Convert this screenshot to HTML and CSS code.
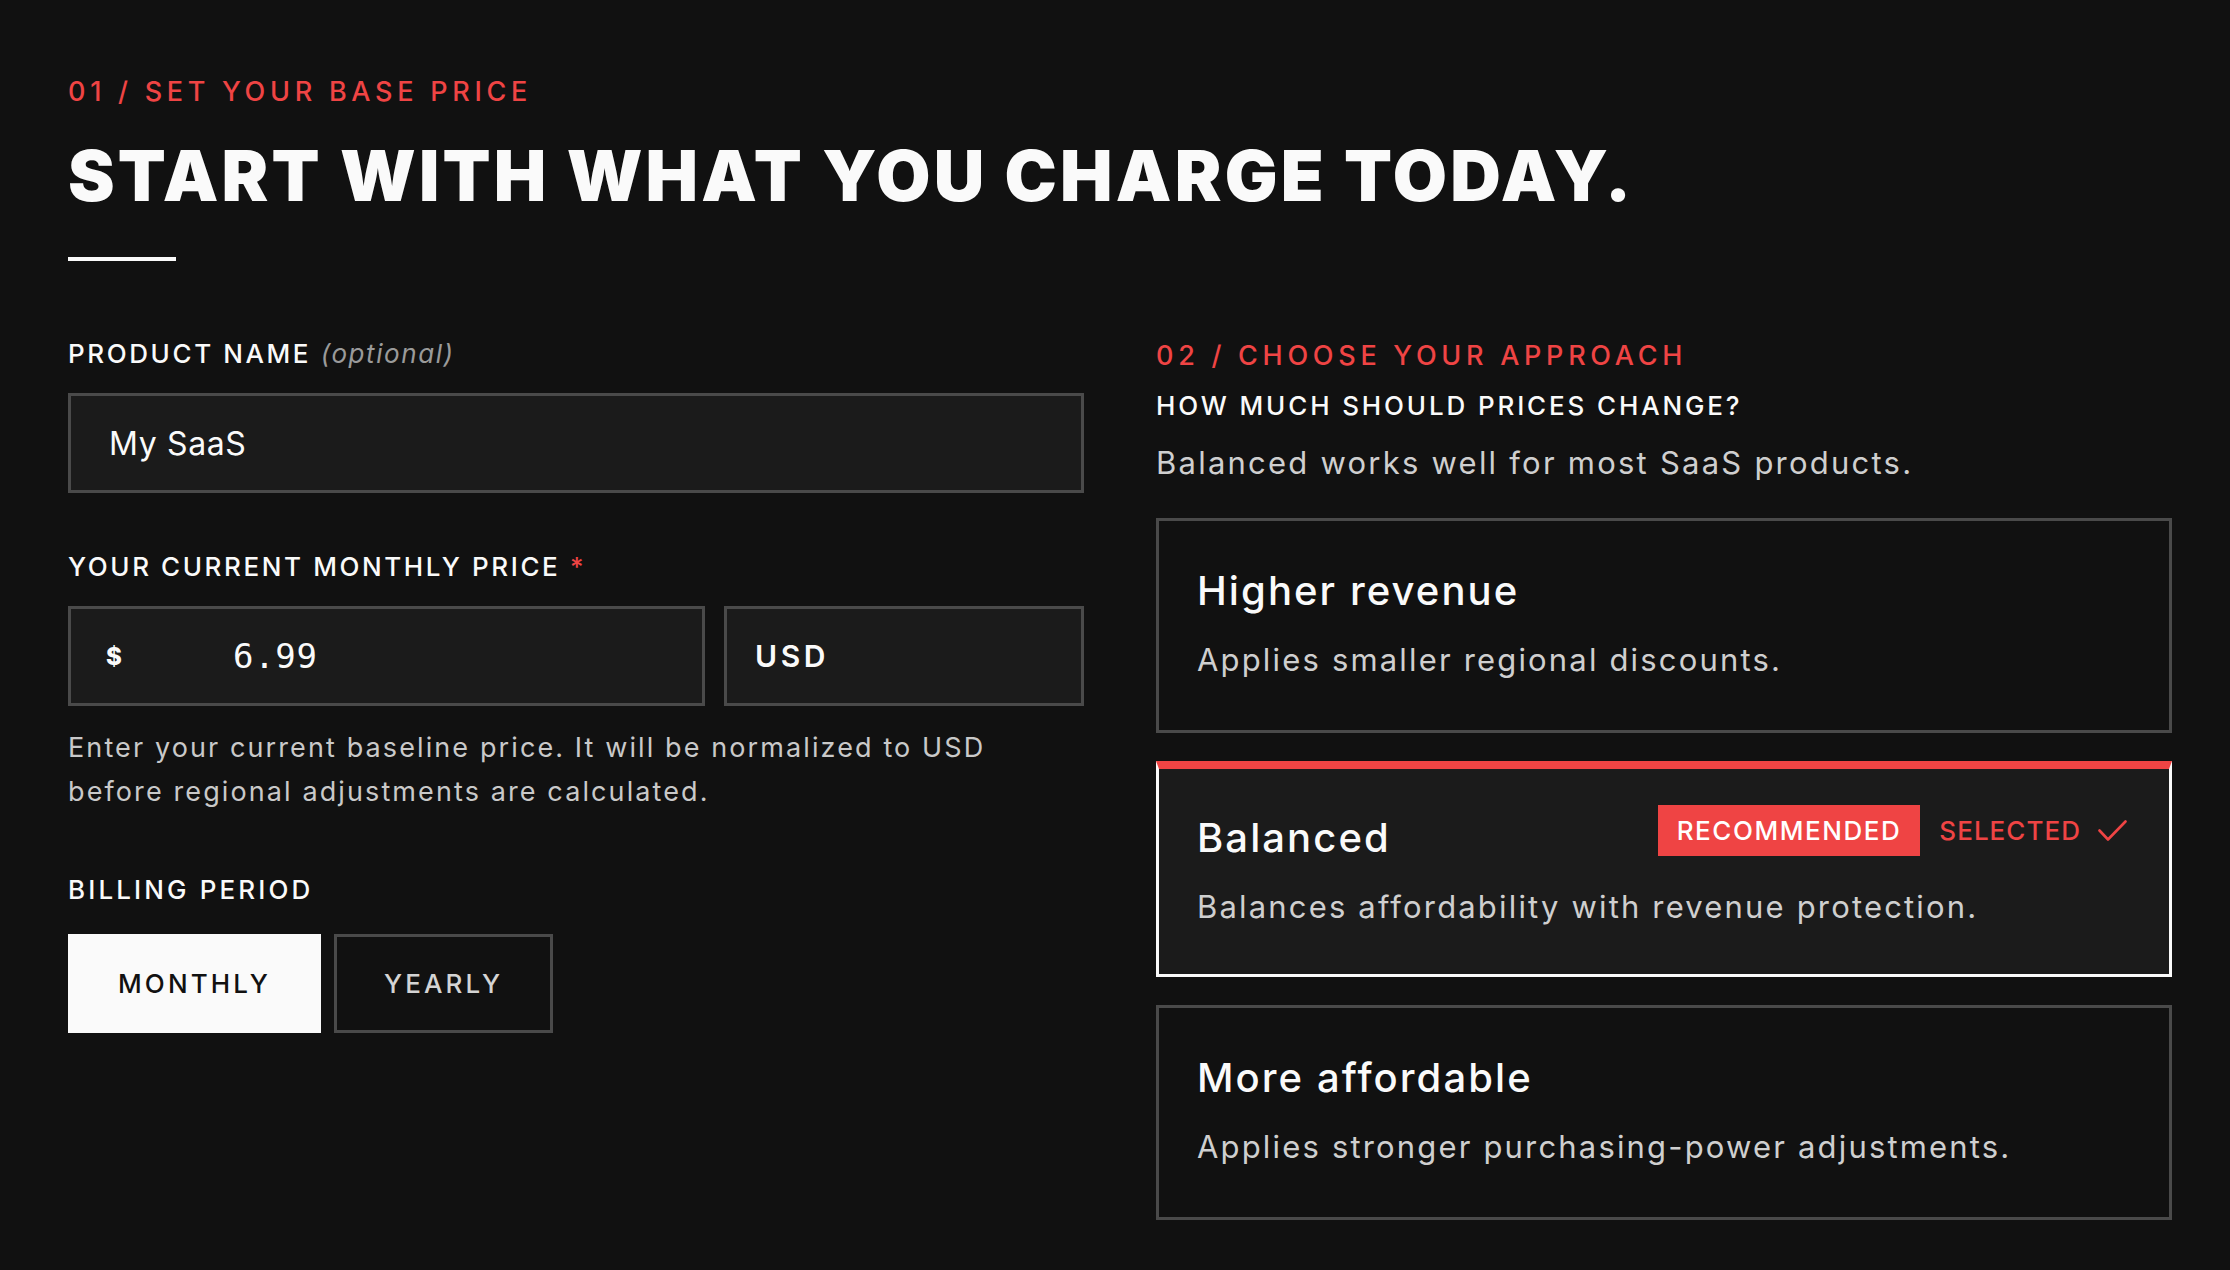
FILE: index.html
```html
<!DOCTYPE html>
<html lang="en">
<head>
  <meta charset="UTF-8" />
  <meta name="viewport" content="width=device-width, initial-scale=1.0"/>
  <title>Regional Pricing - Base Price</title>
  <link rel="stylesheet" href="styles.css">
</head>
<body>
  <main class="page">
    <header class="intro">
      <p class="step">01 / Set your base price</p>
      <h1 class="title">Start with what you charge today.</h1>
      <div class="rule"></div>
    </header>

    <div class="columns">
      <section class="col col-left">
        <div class="field">
          <label class="field-label" for="productName">Product name <em class="optional">(optional)</em></label>
          <input class="text-input" id="productName" type="text" value="My SaaS" />
        </div>

        <div class="field">
          <label class="field-label" for="price">Your current monthly price <span class="req">*</span></label>
          <div class="price-row">
            <div class="price-box">
              <span class="currency-sign">$</span>
              <input class="price-input" id="price" type="text" value="6.99" />
            </div>
            <select class="currency-select">
              <option>USD</option>
              <option>EUR</option>
              <option>GBP</option>
            </select>
          </div>
          <p class="hint">Enter your current baseline price. It will be normalized to USD before regional adjustments are calculated.</p>
        </div>

        <div class="field">
          <span class="field-label">Billing period</span>
          <div class="toggle">
            <button class="toggle-btn active" data-period="monthly">Monthly</button>
            <button class="toggle-btn" data-period="yearly">Yearly</button>
          </div>
        </div>
      </section>

      <section class="col col-right">
        <p class="step">02 / Choose your approach</p>
        <h2 class="question">How much should prices change?</h2>
        <p class="lead">Balanced works well for most SaaS products.</p>

        <div class="options">
          <div class="option">
            <div class="option-head">
              <h3 class="option-title">Higher revenue</h3>
            </div>
            <p class="option-desc">Applies smaller regional discounts.</p>
          </div>

          <div class="option selected">
            <div class="option-head">
              <h3 class="option-title">Balanced</h3>
              <div class="tags">
                <span class="badge">Recommended</span>
                <span class="selected-tag">Selected
                  <svg width="29" height="21" viewBox="0 0 29 21" fill="none" stroke="currentColor" stroke-width="2.6" stroke-linecap="round" stroke-linejoin="round"><path d="M1.5 10.5 L10 19.5 L27.5 1.5"/></svg>
                </span>
              </div>
            </div>
            <p class="option-desc">Balances affordability with revenue protection.</p>
          </div>

          <div class="option">
            <div class="option-head">
              <h3 class="option-title">More affordable</h3>
            </div>
            <p class="option-desc">Applies stronger purchasing-power adjustments.</p>
          </div>
        </div>
      </section>
    </div>
  </main>
</body>
</html>
```

FILE: styles.css
```css
* {
  box-sizing: border-box;
}
body {
  margin: 0;
  background: #111111;
  color: #fafafa;
  font-family: Inter, "Liberation Sans", sans-serif;
}
.page {
  padding: 76px 58px 60px 68px;
}
.step {
  margin: 0;
  color: #ef4444;
  font-size: 27px;
  line-height: 32px;
  font-weight: 500;
  letter-spacing: 0.175em;
  text-transform: uppercase;
}
.title {
  margin: 29px 0 0;
  font-size: 70px;
  line-height: 77px;
  font-weight: 900;
  text-transform: uppercase;
  letter-spacing: 0.046em;
}
.rule {
  width: 108px;
  height: 4px;
  margin-top: 43px;
  background: #fafafa;
}
.columns {
  display: grid;
  grid-template-columns: 1fr 1fr;
  gap: 72px;
  margin-top: 73px;
}
.col-left {
  padding-top: 5px;
}
.col-right {
  padding-top: 6px;
}
.field + .field {
  margin-top: 59px;
}
.field-label {
  display: block;
  margin-bottom: 24px;
  font-size: 26px;
  line-height: 30px;
  font-weight: 500;
  letter-spacing: 0.1em;
  text-transform: uppercase;
}
.optional {
  color: #9a9a9a;
  font-weight: 400;
  text-transform: none;
  letter-spacing: 0.06em;
}
.req {
  color: #ef4444;
}
.text-input {
  display: block;
  width: 100%;
  height: 100px;
  padding: 0 38px;
  background: #1b1b1b;
  border: 3px solid #4a4a4a;
  border-radius: 0;
  color: #fafafa;
  font-family: Inter, sans-serif;
  font-size: 32px;
  letter-spacing: 0.02em;
  outline: none;
}
.price-row {
  display: flex;
  gap: 19px;
}
.price-box {
  flex: 1;
  display: flex;
  align-items: center;
  height: 100px;
  padding-left: 35px;
  background: #1b1b1b;
  border: 3px solid #4a4a4a;
}
.currency-sign {
  width: 127px;
  flex-shrink: 0;
  font-size: 24px;
  font-weight: 800;
}
.price-input {
  flex: 1;
  min-width: 0;
  padding: 0;
  background: transparent;
  border: none;
  color: #fafafa;
  font-family: "DejaVu Sans Mono", monospace;
  font-size: 34px;
  letter-spacing: 0.02em;
  outline: none;
}
.currency-select {
  appearance: none;
  -webkit-appearance: none;
  width: 360px;
  height: 100px;
  padding: 0 28px;
  background: #1b1b1b;
  border: 3px solid #4a4a4a;
  border-radius: 0;
  color: #fafafa;
  font-family: Inter, sans-serif;
  font-size: 30px;
  font-weight: 600;
  letter-spacing: 0.12em;
  outline: none;
}
.hint {
  margin: 20px 0 0;
  color: #c9c9c9;
  font-size: 27px;
  line-height: 44px;
  letter-spacing: 0.078em;
}
.col-left .field:last-child .field-label {
  padding-top: 2px;
  margin-bottom: 29px;
  letter-spacing: 0.12em;
}
.toggle {
  display: flex;
  gap: 13px;
}
.toggle-btn {
  height: 99px;
  padding: 0 47px;
  background: transparent;
  border: 3px solid #4a4a4a;
  border-radius: 0;
  color: #d4d4d4;
  font-family: Inter, sans-serif;
  font-size: 26px;
  font-weight: 500;
  letter-spacing: 0.12em;
  text-transform: uppercase;
  cursor: pointer;
}
.toggle-btn.active {
  background: #fafafa;
  border-color: #fafafa;
  color: #111111;
}
.question {
  margin: 19px 0 0;
  font-size: 26px;
  line-height: 30px;
  font-weight: 500;
  letter-spacing: 0.11em;
  text-transform: uppercase;
}
.lead {
  margin: 22px 0 0;
  color: #cfcfcf;
  font-size: 31px;
  line-height: 40px;
  font-weight: 400;
  letter-spacing: 0.072em;
}
.options {
  display: flex;
  flex-direction: column;
  gap: 28px;
  margin-top: 35px;
}
.option {
  padding: 46px 42px 50px 38px;
  background: #111111;
  border: 3px solid #4a4a4a;
  cursor: pointer;
}
.option.selected {
  padding-top: 45px;
  padding-bottom: 47px;
  background: #1b1b1b;
  border-color: #fafafa;
  border-top: 8px solid #ef4444;
}
.option-head {
  display: flex;
  align-items: flex-start;
  justify-content: space-between;
}
.option-title {
  margin: 0;
  font-size: 40px;
  line-height: 48px;
  font-weight: 500;
  letter-spacing: 0.052em;
}
.option-desc {
  margin: 25px 0 0;
  color: #cfcfcf;
  font-size: 31px;
  line-height: 40px;
  font-weight: 400;
  letter-spacing: 0.07em;
}
.tags {
  display: flex;
  align-items: center;
  gap: 19px;
  margin-top: -9px;
}
.badge {
  display: flex;
  align-items: center;
  height: 51px;
  padding: 0 19px;
  background: #ef4444;
  color: #ffffff;
  font-size: 26px;
  font-weight: 500;
  letter-spacing: 0.06em;
  text-transform: uppercase;
}
.selected-tag {
  display: flex;
  align-items: center;
  gap: 17px;
  color: #ef4444;
  font-size: 26px;
  font-weight: 500;
  letter-spacing: 0.04em;
  text-transform: uppercase;
}
```
